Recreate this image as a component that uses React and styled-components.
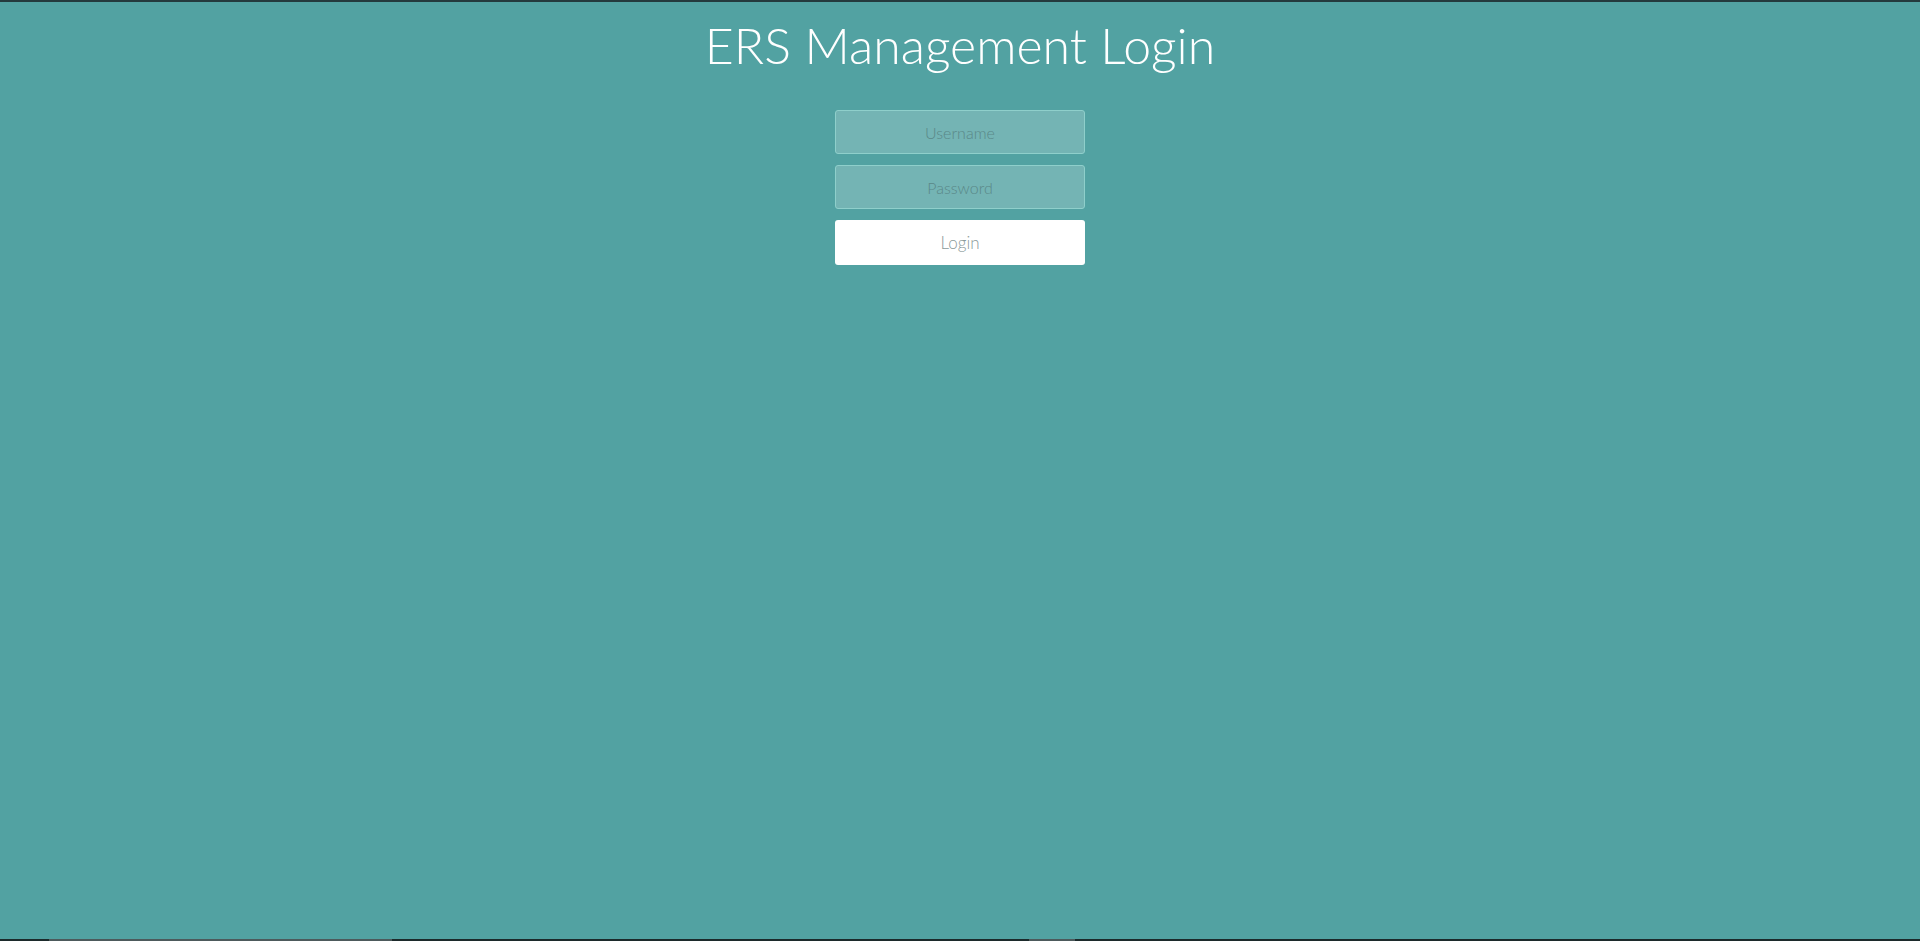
import styled, { createGlobalStyle } from 'styled-components';

const GlobalStyle = createGlobalStyle`
  html, body {
    margin: 0;
    padding: 0;
    height: 100%;
  }
  body {
    background-color: #52a2a2;
    font-family: Lato, "Open Sans", sans-serif;
  }
`;

const App = () => {
  return (
    <Page>
      <GlobalStyle />
      <TopEdge />
      <Main>
        <Title>ERS Management Login</Title>
        <Form onSubmit={(e) => e.preventDefault()}>
          <Field type="text" placeholder="Username" />
          <Field type="password" placeholder="Password" />
          <LoginButton type="submit">Login</LoginButton>
        </Form>
      </Main>
      <BottomEdge>
        <Segment width="49px" />
        <Segment width="343px" light />
        <Segment width="637px" />
        <Segment width="46px" light />
        <Segment grow />
      </BottomEdge>
    </Page>
  );
};

export default App;

const Page = styled.div`
  display: flex;
  flex-direction: column;
  height: 941px;
  background-color: #52a2a2;
`;

const TopEdge = styled.div`
  height: 2px;
  background-color: #243a3d;
`;

const Main = styled.main`
  flex-grow: 1;
  display: flex;
  flex-direction: column;
  align-items: center;
`;

const Title = styled.h1`
  margin: 11px 0 0 0;
  font-family: Lato, "Open Sans", sans-serif;
  font-weight: 300;
  font-size: 50px;
  line-height: 64px;
  color: #ffffff;
`;

const Form = styled.form`
  display: flex;
  flex-direction: column;
  gap: 11px;
  width: 250px;
  margin-top: 33px;
`;

const Field = styled.input`
  box-sizing: border-box;
  width: 100%;
  height: 44px;
  border: 1px solid #8fcfcb;
  border-radius: 3px;
  background-color: rgba(255, 255, 255, 0.2);
  text-align: center;
  font-family: Lato, "Open Sans", sans-serif;
  font-weight: 300;
  font-size: 16px;
  color: #ffffff;
  outline: none;

  &::placeholder {
    color: #5a8888;
  }
`;

const LoginButton = styled.button`
  box-sizing: border-box;
  width: 100%;
  height: 45px;
  border: none;
  border-radius: 3px;
  background-color: #ffffff;
  font-family: Lato, "Open Sans", sans-serif;
  font-weight: 300;
  font-size: 17px;
  color: #8a9a9a;
  cursor: pointer;
`;

const BottomEdge = styled.div`
  display: flex;
  height: 2px;
`;

const Segment = styled.div`
  width: ${({ width }) => width || 'auto'};
  flex-grow: ${({ grow }) => (grow ? 1 : 0)};
  background-color: ${({ light }) => (light ? '#4d5a5c' : '#1c2a2b')};
`;
